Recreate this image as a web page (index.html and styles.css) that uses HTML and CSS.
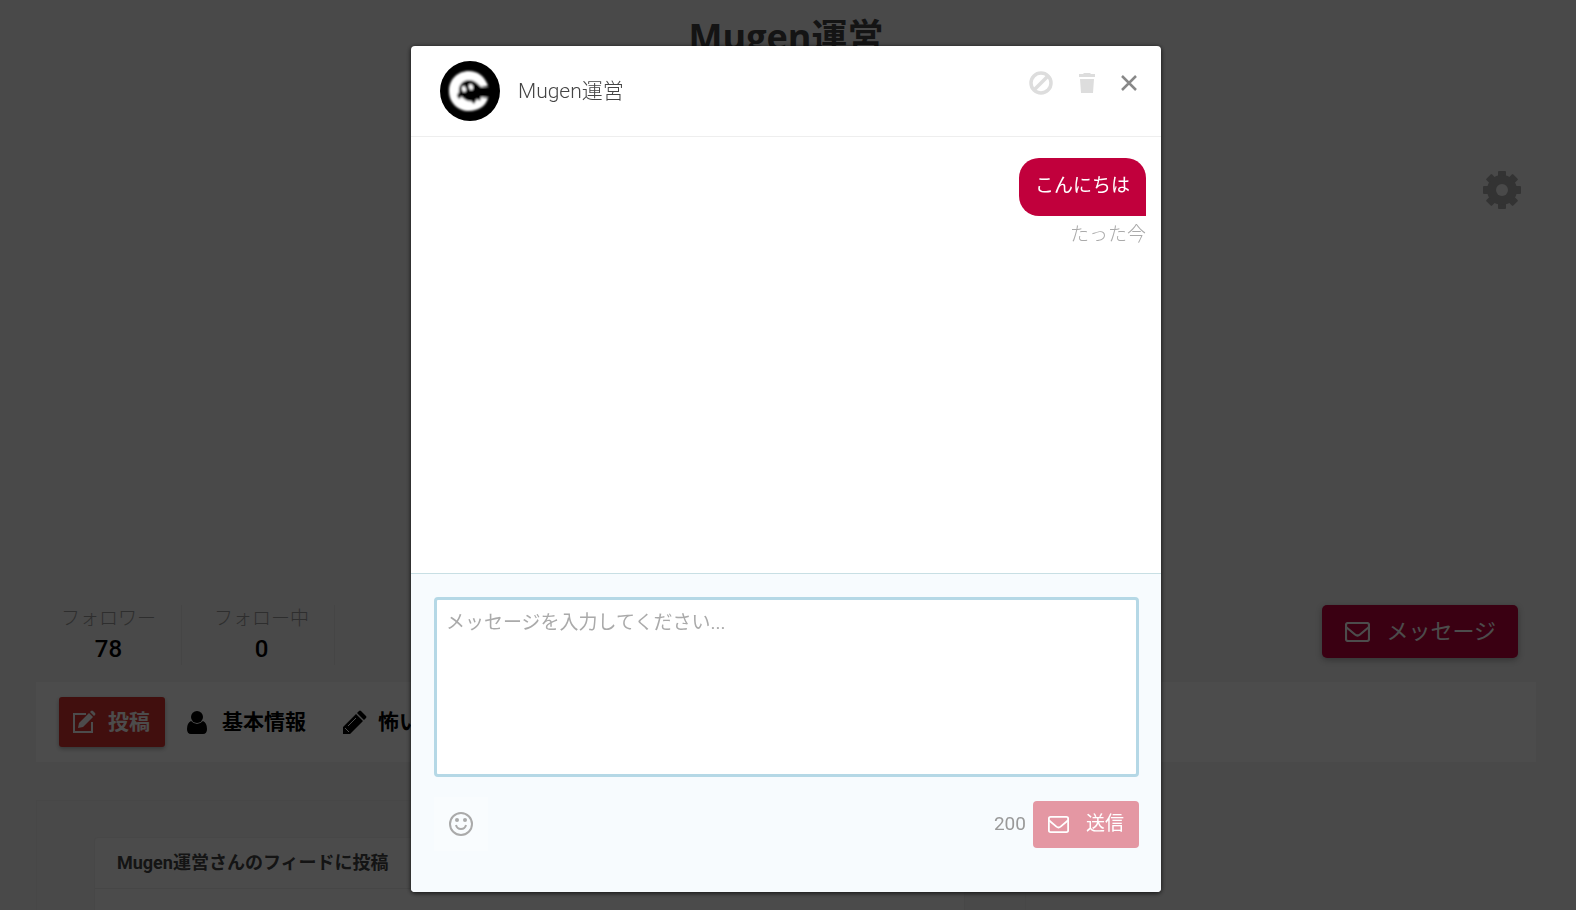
FILE: index.html
```html
<!DOCTYPE html>
<html lang="ja">
<head>
    <meta charset="UTF-8">
    <meta name="viewport" content="width=device-width, initial-scale=1.0">
    <title>Mugen運営</title>
    <link rel="stylesheet" href="styles.css">
</head>
<body>
    <svg class="sprite" width="0" height="0">
        <symbol id="icon-mail" viewBox="0 0 25 20">
            <rect x="1" y="1" width="23" height="18" rx="2" fill="none" stroke="currentColor" stroke-width="2.200"/>
            <path d="M1 5 L10 12.500 Q12.500 14.500 15 12.500 L24 5" fill="none" stroke="currentColor" stroke-width="2.200"/>
        </symbol>
    </svg>

    <main class="page">
        <section class="cover">
            <h1 class="cover-title">Mugen運営</h1>
            <button class="gear" type="button" aria-label="設定">
                <svg width="40" height="40" viewBox="0 0 40 40">
                    <g fill="currentColor">
                        <rect x="16" y="1" width="8" height="38" rx="1"/>
                        <rect x="16" y="1" width="8" height="38" rx="1" transform="rotate(45 20 20)"/>
                        <rect x="16" y="1" width="8" height="38" rx="1" transform="rotate(90 20 20)"/>
                        <rect x="16" y="1" width="8" height="38" rx="1" transform="rotate(135 20 20)"/>
                        <circle cx="20" cy="20" r="15"/>
                    </g>
                    <circle cx="20" cy="20" r="6" fill="#f3f3f3"/>
                </svg>
            </button>
        </section>

        <section class="summary">
            <dl class="stats">
                <div class="stat"><dt>フォロワー</dt><dd>78</dd></div>
                <div class="stat"><dt>フォロー中</dt><dd>0</dd></div>
            </dl>
            <button class="message-btn" type="button">
                <svg width="25" height="20"><use href="#icon-mail"/></svg>メッセージ
            </button>
        </section>

        <nav class="tabs">
            <a class="tab active" href="#posts">
                <svg width="24" height="24" viewBox="0 0 24 24">
                    <path d="M13 4 H1 V22 H19 V12" fill="none" stroke="currentColor" stroke-width="2"/>
                    <path d="M5 18 L6 13 L16 3 L20 7 L10 17 Z M17 2 L18 1 Q19 0 20 1 L22 3 Q23 4 22 5 L21 6 Z" fill="currentColor"/>
                </svg>投稿
            </a>
            <a class="tab" href="#profile">
                <svg width="24" height="24" viewBox="0 0 24 24">
                    <circle cx="10" cy="7" r="6" fill="currentColor"/>
                    <path d="M4 11 Q10 17 16 11 Q20 13 20 19 Q20 24 16 24 H4 Q0 24 0 19 Q0 13 4 11 Z" fill="currentColor"/>
                </svg>基本情報
            </a>
            <a class="tab" href="#stories">
                <svg width="24" height="24" viewBox="0 0 24 24">
                    <path d="M0 17 L13 4 L20 11 L7 24 H0 Z M14 3 L16 1 Q17 0 18 1 L23 6 Q24 7 23 8 L21 10 Z" fill="currentColor"/>
                    <path d="M5 16 L13 8 M2 18 L6 22" stroke="#fff" stroke-width="1"/>
                </svg>怖い話
            </a>
        </nav>

        <section class="feed">
            <div class="post-card">
                <h2>Mugen運営さんのフィードに投稿</h2>
            </div>
        </section>
    </main>

    <div class="overlay">
        <div class="modal" role="dialog" aria-label="Mugen運営">
            <header class="modal-header">
                <svg class="avatar" width="60" height="60" viewBox="0 0 60 60">
                    <defs>
                        <filter id="soft"><feGaussianBlur stdDeviation="0.9"/></filter>
                    </defs>
                    <circle cx="30" cy="30" r="30"/>
                    <g filter="url(#soft)">
                        <path d="M48 25 C45 15 37 10 29 10 C17 10 9 19 9 30 C9 42 18 50 29 50 C38 50 46 45 48 37 L40 36 L32 30 L40 26 Z" fill="#fff"/>
                        <path d="M19 31 C18 24 23 19 29 19 C35 19 38 23 41 26 L49 27 V36 H41 L40 40 L37 38 L34 43 L31 40 C27 41 24 38 21 35 L20 38 L18 37 L17 34 Z"/>
                        <ellipse cx="24" cy="28" rx="2" ry="3" fill="#fff" transform="rotate(-12 24 28)"/>
                        <ellipse cx="31" cy="26" rx="2" ry="3" fill="#fff" transform="rotate(-12 31 26)"/>
                    </g>
                </svg>
                <span class="modal-name">Mugen運営</span>
                <div class="modal-actions">
                    <button class="ban" type="button" aria-label="ブロック">
                        <svg width="24" height="24" viewBox="0 0 24 24" fill="none" stroke="currentColor" stroke-width="3.500">
                            <circle cx="12" cy="12" r="10"/>
                            <path d="M5 19 L19 5"/>
                        </svg>
                    </button>
                    <button class="trash" type="button" aria-label="削除">
                        <svg width="18" height="22" viewBox="0 0 18 22" fill="currentColor">
                            <path d="M1 2 H5 L6 1 H12 L13 2 H17 V5 H1 Z M2 7 H16 L15 21 H3 Z"/>
                        </svg>
                    </button>
                    <button class="close" type="button" aria-label="閉じる">
                        <svg width="16" height="16" viewBox="0 0 16 16" fill="none" stroke="currentColor" stroke-width="2.500">
                            <path d="M1 1 L15 15 M15 1 L1 15"/>
                        </svg>
                    </button>
                </div>
            </header>

            <div class="messages">
                <p class="bubble">こんにちは</p>
                <time class="sent-at">たった今</time>
            </div>

            <form class="composer">
                <textarea aria-label="メッセージ" placeholder="メッセージを入力してください..."></textarea>
                <div class="composer-bar">
                    <button class="emoji" type="button" aria-label="絵文字">
                        <svg width="24" height="24" viewBox="0 0 24 24" fill="none" stroke="currentColor" stroke-width="2">
                            <circle cx="12" cy="12" r="11"/>
                            <path d="M7 13 Q8 17 12 17 Q16 17 17 13"/>
                            <circle cx="8" cy="8" r="2" fill="currentColor" stroke="none"/>
                            <circle cx="16" cy="8" r="2" fill="currentColor" stroke="none"/>
                        </svg>
                    </button>
                    <span class="count">200</span>
                    <button class="send" type="button">
                        <svg width="21" height="17"><use href="#icon-mail"/></svg>送信
                    </button>
                </div>
            </form>
        </div>
    </div>
</body>
</html>
```

FILE: styles.css
```css
* {
    box-sizing: border-box;
}
body {
    margin: 0;
    background: #f3f3f3;
    color: #444;
    font-family: Roboto, "Noto Sans CJK JP", sans-serif;
    font-size: 19px;
    line-height: 28px;
}
h1, h2, p, dl, dd {
    margin: 0;
}
button {
    padding: 0;
    border: none;
    background: none;
    color: inherit;
    font: inherit;
    cursor: pointer;
}
svg {
    display: block;
    flex: none;
}
.sprite {
    position: absolute;
}

/* profile page */
.page {
    display: flex;
    flex-direction: column;
    height: 100vh;
    padding: 0 40px 0 36px;
}
.cover {
    display: flex;
    flex-direction: column;
    flex: none;
    height: 605px;
}
.cover-title {
    padding-top: 12px;
    font-family: "Open Sans", "Noto Sans CJK JP", sans-serif;
    font-size: 36px;
    line-height: 50px;
    text-align: center;
}
.gear {
    align-self: flex-end;
    margin: 108px 14px 0 0;
    color: #aaa;
}
.summary {
    display: flex;
    flex: none;
    justify-content: space-between;
    align-items: flex-start;
    height: 77px;
    padding-right: 18px;
}
.stats {
    display: flex;
    gap: 7px;
}
.stat {
    height: 60px;
    padding: 0 25px;
    border-right: 1px solid #e6e6e6;
    text-align: center;
}
.stat dt {
    color: #999;
    font-weight: 300;
}
.stat dd {
    color: #000;
    font-size: 24px;
    font-weight: 500;
    line-height: 32px;
}
.message-btn {
    display: flex;
    align-items: center;
    gap: 16px;
    height: 53px;
    padding: 0 22px 0 23px;
    border-radius: 5px;
    background: #c1003c;
    color: #fff;
    font-size: 22px;
    box-shadow: 0 2px 6px rgba(0, 0, 0, 0.3);
}
.tabs {
    display: flex;
    flex: none;
    align-items: center;
    gap: 8px;
    height: 80px;
    padding: 0 23px;
    background: #fff;
}
.tab {
    display: flex;
    align-items: center;
    gap: 11px;
    height: 50px;
    padding: 0 15px 0 14px;
    border-radius: 3px;
    color: #000;
    font-size: 21px;
    font-weight: 700;
    text-decoration: none;
}
.tab.active {
    background: #d9332f;
    color: #fff;
    box-shadow: 0 2px 4px rgba(0, 0, 0, 0.3);
}
.feed {
    display: flex;
    flex: 1;
    width: 66%;
    min-height: 0;
    margin-top: 38px;
    padding: 36px 60px 0 57px;
    border: 1px solid #eee;
    border-bottom: none;
}
.post-card {
    flex: 1;
    border: 1px solid #eee;
    border-bottom: none;
    border-radius: 4px 4px 0 0;
    background: #fafafa;
}
.post-card h2 {
    padding: 0 22px;
    border-bottom: 1px solid #e9e9e9;
    font-size: 18px;
    font-weight: 700;
    line-height: 50px;
}

/* message dialog */
.overlay {
    position: fixed;
    inset: 0;
    padding: 46px 4px 18px 0;
    background: rgba(0, 0, 0, 0.7);
}
.modal {
    display: flex;
    flex-direction: column;
    max-width: 750px;
    height: 100%;
    margin: 0 auto;
    overflow: hidden;
    border-radius: 4px;
    background: #fff;
    box-shadow: 0 1px 5px rgba(0, 0, 0, 0.8);
}
.modal-header {
    display: flex;
    align-items: center;
    gap: 18px;
    height: 91px;
    padding: 0 24px 0 29px;
    border-bottom: 1px solid #eee;
}
.modal-name {
    font-size: 21px;
    font-weight: 300;
}
.modal-actions {
    display: flex;
    align-items: center;
    gap: 25px;
    margin: 0 0 16px auto;
    color: #ddd;
}
.close {
    color: #888;
}
.messages {
    flex: 1;
    display: flex;
    flex-direction: column;
    align-items: flex-end;
    padding: 21px 15px;
}
.bubble {
    padding: 14px 16px 16px;
    border-radius: 20px 20px 0 20px;
    background: #c1003c;
    color: #fff;
}
.sent-at {
    margin-top: 5px;
    color: #aaa;
    font-weight: 300;
}
.composer {
    height: 319px;
    padding: 23px 22px 0 23px;
    border-top: 1px solid #c8dfe4;
    background: #f7fbfe;
}
.composer textarea {
    display: block;
    width: 100%;
    height: 180px;
    padding: 9px;
    border: 3px solid #b5d8e6;
    border-radius: 4px;
    outline: none;
    background: #fff;
    font: inherit;
    resize: none;
}
.composer textarea::placeholder {
    color: #aaa;
}
.composer-bar {
    display: flex;
    align-items: center;
    margin-top: 20px;
}
.emoji {
    padding: 15px;
    background: #f9fcfe;
    color: #aaa;
}
.count {
    margin: 0 7px 0 auto;
    color: #999;
}
.send {
    display: flex;
    align-items: center;
    gap: 17px;
    height: 47px;
    padding: 0 15px;
    border-radius: 4px;
    background: #e497a3;
    color: #fff;
}
```
